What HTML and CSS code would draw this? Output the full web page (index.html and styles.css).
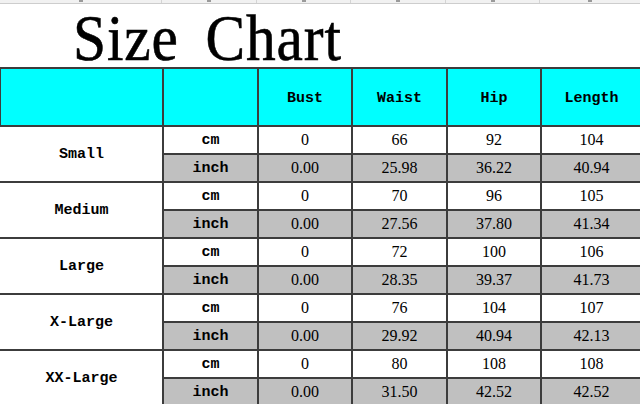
FILE: index.html
```html
<!DOCTYPE html>
<html>
<head>
<meta charset="utf-8">
<link rel="stylesheet" href="styles.css">
</head>
<body>
<div class="ruler">
  <div class="rc c1"><i></i></div>
  <div class="rc c2"><i></i></div>
  <div class="rc c3"><i></i></div>
  <div class="rc c4"><i></i></div>
  <div class="rc c5"><i></i></div>
  <div class="rc c6"><i></i></div>
</div>
<div class="title"><span class="title-text">Size Chart</span></div>
<table class="chart">
  <colgroup>
    <col class="w-size"><col class="w-unit"><col class="w-val"><col class="w-val2"><col class="w-val"><col class="w-len">
  </colgroup>
  <thead>
    <tr class="head">
      <th></th><th></th><th>Bust</th><th>Waist</th><th>Hip</th><th>Length</th>
    </tr>
  </thead>
  <tbody>
    <tr class="cm"><td class="size" rowspan="2">Small</td><td class="unit">cm</td><td>0</td><td>66</td><td>92</td><td>104</td></tr>
    <tr class="inch"><td class="unit">inch</td><td>0.00</td><td>25.98</td><td>36.22</td><td>40.94</td></tr>
    <tr class="cm"><td class="size" rowspan="2">Medium</td><td class="unit">cm</td><td>0</td><td>70</td><td>96</td><td>105</td></tr>
    <tr class="inch"><td class="unit">inch</td><td>0.00</td><td>27.56</td><td>37.80</td><td>41.34</td></tr>
    <tr class="cm"><td class="size" rowspan="2">Large</td><td class="unit">cm</td><td>0</td><td>72</td><td>100</td><td>106</td></tr>
    <tr class="inch"><td class="unit">inch</td><td>0.00</td><td>28.35</td><td>39.37</td><td>41.73</td></tr>
    <tr class="cm"><td class="size" rowspan="2">X-Large</td><td class="unit">cm</td><td>0</td><td>76</td><td>104</td><td>107</td></tr>
    <tr class="inch"><td class="unit">inch</td><td>0.00</td><td>29.92</td><td>40.94</td><td>42.13</td></tr>
    <tr class="cm"><td class="size" rowspan="2">XX-Large</td><td class="unit">cm</td><td>0</td><td>80</td><td>108</td><td>108</td></tr>
    <tr class="inch"><td class="unit">inch</td><td>0.00</td><td>31.50</td><td>42.52</td><td>42.52</td></tr>
  </tbody>
</table>
</body>
</html>
```
FILE: styles.css
```css
html, body {
  margin: 0;
  padding: 0;
  background: #ffffff;
  width: 640px;
  height: 404px;
  overflow: hidden;
}
.ruler {
  display: flex;
  height: 3px;
  background: #f1f1f1;
  border-bottom: 1px solid #cdcdcd;
  width: 640px;
}
.rc {
  position: relative;
  border-right: 1px solid #d4d4d4;
  box-sizing: border-box;
}
.rc i {
  position: absolute;
  left: 50%;
  top: 0;
  width: 4px;
  height: 2px;
  margin-left: -2px;
  background: #9a9a9a;
}
.c1 { width: 162px; }
.c2 { width: 95px; }
.c3 { width: 94px; }
.c4 { width: 95px; }
.c5 { width: 94px; }
.c6 { width: 100px; border-right: none; }
.title {
  height: 63px;
  padding-left: 73px;
  box-sizing: border-box;
  overflow: visible;
}
.title-text {
  display: inline-block;
  font-family: "Liberation Serif", serif;
  font-weight: normal;
  font-size: 66px;
  line-height: 50px;
  margin-top: 9px;
  word-spacing: 12px;
  letter-spacing: 1px;
  transform: scaleX(0.9);
  transform-origin: left top;
  white-space: nowrap;
  color: #000;
  -webkit-text-stroke: 0.6px #000;
}
.chart {
  border-collapse: collapse;
  table-layout: fixed;
  width: 642px;
  margin-left: -1px;
}
.w-size { width: 163px; }
.w-unit { width: 95px; }
.w-val { width: 94px; }
.w-val2 { width: 95px; }
.w-len { width: 101px; }
.chart th, .chart td {
  border: 2px solid #3c3c3c;
  padding: 0;
  text-align: center;
  vertical-align: middle;
  color: #000;
}
.chart td:first-child.size {
  border-left-color: transparent;
}
.head th {
  background: #00ffff;
  height: 53px;
  font-family: "Liberation Mono", monospace;
  font-weight: bold;
  font-size: 15px;
  padding-top: 3px;
}
.chart td {
  height: 26px;
  font-family: "Liberation Serif", serif;
  font-size: 16px;
}
.chart td.size {
  background: #ffffff;
  font-family: "Liberation Mono", monospace;
  font-weight: bold;
  font-size: 15px;
}
.chart td.unit {
  font-family: "Liberation Mono", monospace;
  font-weight: bold;
  font-size: 15px;
}
.inch td {
  background: #c0c0c0;
}
.cm td {
  background: #ffffff;
}
```
